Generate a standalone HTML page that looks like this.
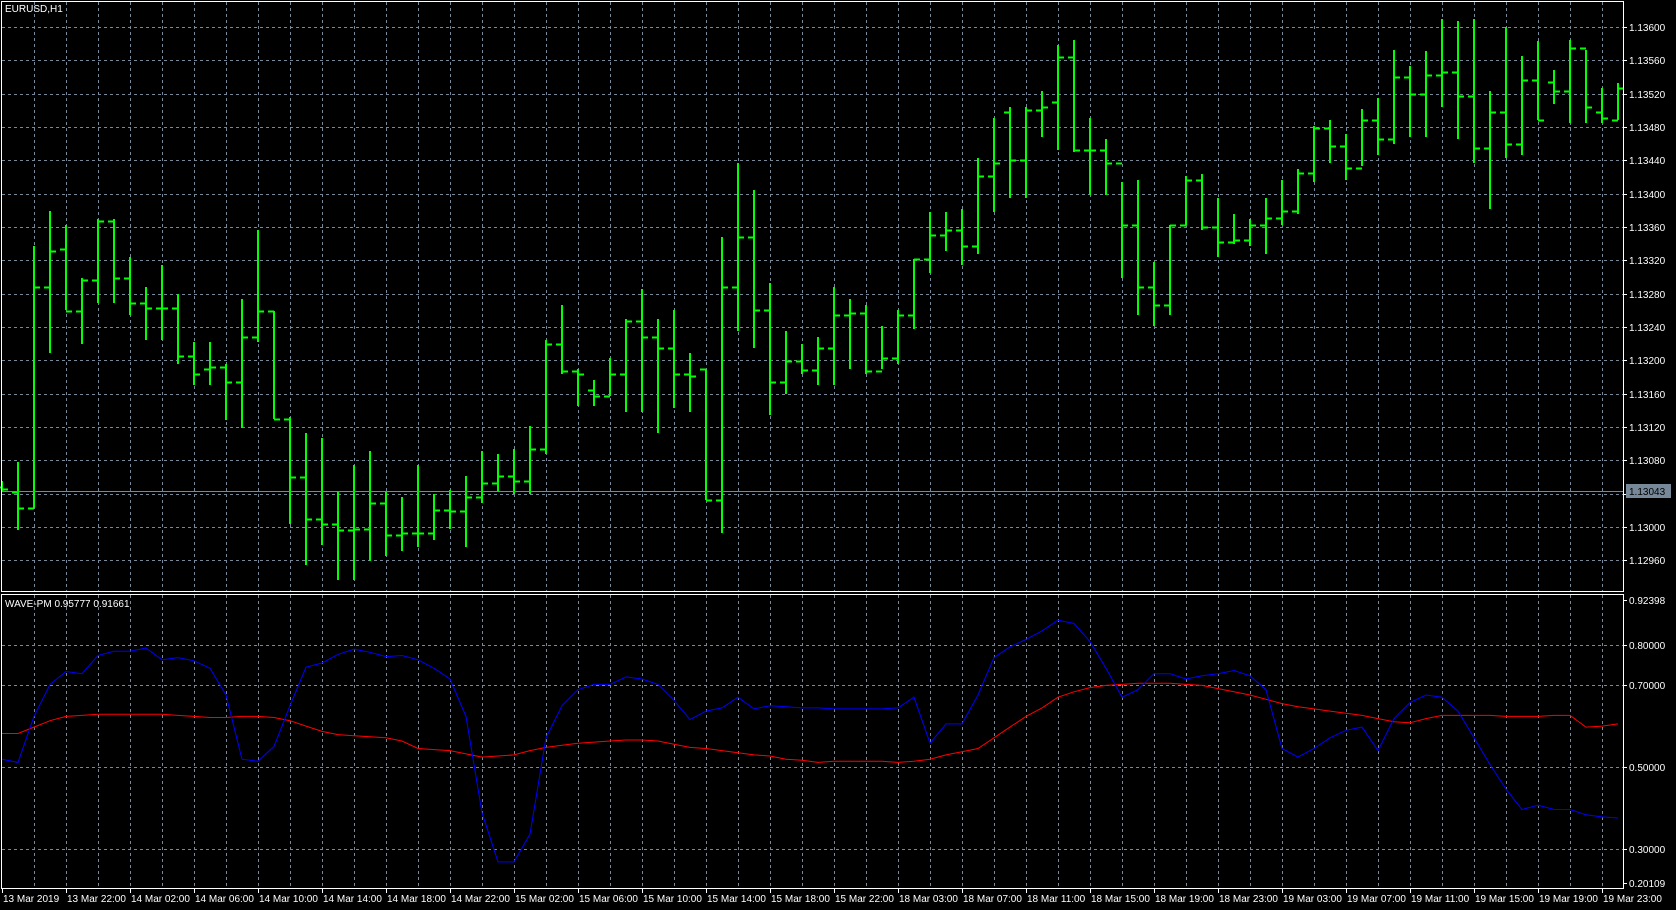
<!DOCTYPE html>
<html><head><meta charset="utf-8"><style>
html,body{margin:0;padding:0;background:#000;width:1676px;height:910px;overflow:hidden}
svg{display:block}
text{font-family:"Liberation Sans",sans-serif;font-size:10px;fill:#fff}
</style></head><body>
<svg id="s" width="1676" height="910" xmlns="http://www.w3.org/2000/svg">
<rect width="1676" height="910" fill="#000"/>
<g id="grid" stroke="#778899" stroke-width="1" stroke-dasharray="3,3"></g>
<g id="bars" stroke="#00ff00" stroke-width="2" fill="none"></g>
<line x1="2" y1="491.5" x2="1623" y2="491.5" stroke="#778899"/>
<polyline id="red" fill="none" stroke="#ff0000" stroke-width="1"/>
<polyline id="blue" fill="none" stroke="#0000ff" stroke-width="1"/>
<g stroke="#fff" stroke-width="1" fill="none">
<rect x="1.5" y="1.5" width="1622" height="590"/>
<rect x="1.5" y="594.5" width="1622" height="294"/>
</g>
<g id="ticks" stroke="#fff" stroke-width="1"></g>
<rect x="1626" y="484" width="45" height="14" fill="#778899"/>
<text x="1629" y="495" style="fill:#000">1.13043</text>
<text x="5" y="12" style="font-size:10px">EURUSD,H1</text>
<text x="5" y="607" style="font-size:10px">WAVE-PM 0.95777 0.91661</text>
<g id="labels">
<text x="1629" y="31">1.13600</text><text x="1629" y="64">1.13560</text><text x="1629" y="98">1.13520</text><text x="1629" y="131">1.13480</text><text x="1629" y="164">1.13440</text><text x="1629" y="198">1.13400</text><text x="1629" y="231">1.13360</text><text x="1629" y="264">1.13320</text><text x="1629" y="298">1.13280</text><text x="1629" y="331">1.13240</text><text x="1629" y="364">1.13200</text><text x="1629" y="398">1.13160</text><text x="1629" y="431">1.13120</text><text x="1629" y="464">1.13080</text><text x="1629" y="531">1.13000</text><text x="1629" y="564">1.12960</text>
<text x="1629" y="604">0.92398</text><text x="1629" y="649">0.80000</text><text x="1629" y="689">0.70000</text><text x="1629" y="771">0.50000</text><text x="1629" y="853">0.30000</text><text x="1629" y="887">0.20109</text>
</g>
<g id="times">
<text x="3" y="902">13 Mar 2019</text><text x="67" y="902">13 Mar 22:00</text><text x="131" y="902">14 Mar 02:00</text><text x="195" y="902">14 Mar 06:00</text><text x="259" y="902">14 Mar 10:00</text><text x="323" y="902">14 Mar 14:00</text><text x="387" y="902">14 Mar 18:00</text><text x="451" y="902">14 Mar 22:00</text><text x="515" y="902">15 Mar 02:00</text><text x="579" y="902">15 Mar 06:00</text><text x="643" y="902">15 Mar 10:00</text><text x="707" y="902">15 Mar 14:00</text><text x="771" y="902">15 Mar 18:00</text><text x="835" y="902">15 Mar 22:00</text><text x="899" y="902">18 Mar 03:00</text><text x="963" y="902">18 Mar 07:00</text><text x="1027" y="902">18 Mar 11:00</text><text x="1091" y="902">18 Mar 15:00</text><text x="1155" y="902">18 Mar 19:00</text><text x="1219" y="902">18 Mar 23:00</text><text x="1283" y="902">19 Mar 03:00</text><text x="1347" y="902">19 Mar 07:00</text><text x="1411" y="902">19 Mar 11:00</text><text x="1475" y="902">19 Mar 15:00</text><text x="1539" y="902">19 Mar 19:00</text><text x="1603" y="902">19 Mar 23:00</text>
</g>
</svg>
<script>
var NS="http://www.w3.org/2000/svg";
function el(p,t,a){var e=document.createElementNS(NS,t);for(var k in a)e.setAttribute(k,a[k]);p.appendChild(e);return e;}
var g=document.getElementById('grid'),tk=document.getElementById('ticks');
for(var x=34;x<1623;x+=32){el(g,'line',{x1:x+.5,y1:2,x2:x+.5,y2:591});el(g,'line',{x1:x+.5,y1:595,x2:x+.5,y2:888});}
for(var i=0;i<17;i++){var y=Math.round(27+i*33.33)+.5;el(g,'line',{x1:2,y1:y,x2:1623,y2:y});el(tk,'line',{x1:1623,y1:y,x2:1627,y2:y});}
[645,685,767,849].forEach(function(y){el(g,'line',{x1:2,y1:y+.5,x2:1623,y2:y+.5});el(tk,'line',{x1:1623,y1:y+.5,x2:1627,y2:y+.5});});
[600,883].forEach(function(y){el(tk,'line',{x1:1623,y1:y+.5,x2:1627,y2:y+.5});});
for(var k=0;k<26;k++){var x=2+64*k+.5;el(tk,'line',{x1:x,y1:888,x2:x,y2:893});}
var S=1.0693;
var B=[[450,460,455,457],[432,496,460,475],[230,475,475,268],[197,330,268,235],[210,290,233,291],[260,322,291,262],[205,283,262,207],[205,283,207,260],[240,295,260,283],[268,318,283,288],[248,318,288,288],[275,340,288,333],[320,360,333,350],[320,360,345,343],[340,393,343,357],[280,400,357,315],[215,320,315,291],[291,392,291,392],[390,490,392,446],[405,528,446,485],[410,510,485,490],[460,542,490,496],[435,542,496,495],[422,525,495,470],[460,520,470,500],[465,515,500,498],[435,512,498,498],[462,505,498,477],[458,495,477,478],[445,512,478,465],[422,470,465,452],[425,460,452,445],[420,462,445,450],[398,462,450,420],[318,425,420,322],[285,350,322,347],[345,380,347,350],[355,380,365,370],[335,370,370,350],[298,385,350,300],[270,385,300,315],[298,405,315,325],[290,382,325,350],[330,385,350,352],[345,468,345,468],[222,498,468,268],[152,310,268,222],[178,325,222,290],[265,388,290,357],[310,368,357,338],[322,350,338,346],[315,360,346,325],[268,360,325,295],[280,345,295,293],[285,350,293,347],[305,345,347,335],[290,340,335,295],[242,308,295,242],[198,255,242,220],[198,235,220,215],[195,248,215,230],[148,238,230,165],[110,198,165,152],[100,185,105,150],[100,185,150,103],[85,128,103,100],[42,140,95,53],[37,142,53,140],[110,182,140,140],[130,182,140,152],[170,260,152,210],[168,295,210,268],[245,305,268,285],[210,295,285,210],[165,210,210,168],[163,215,168,212],[185,240,212,226],[200,228,226,224],[205,230,224,210],[185,238,210,204],[168,210,204,197],[158,200,197,162],[118,170,162,120],[112,152,120,137],[125,168,137,157],[102,155,157,112],[92,145,112,130],[47,135,130,72],[62,128,72,88],[48,128,88,70],[18,100,70,67],[20,130,67,90],[18,152,90,138],[85,195,138,105],[25,148,105,135],[52,145,135,75],[38,112,75,112],[65,97,77,85],[37,115,85,45],[47,115,45,100],[82,115,105,110],[78,112,112,82]];
var bg=document.getElementById('bars'),d='';
B.forEach(function(b,i){var x=2+16*i;var h=Math.round(b[0]*S),l=Math.round(b[1]*S),o=Math.round(b[2]*S)+.5,c=Math.round(b[3]*S)+.5;
d+='M'+x+' '+h+'V'+l+'M'+(x-6)+' '+o+'H'+x+'M'+x+' '+c+'H'+(x+6);});
el(bg,'path',{d:d});
var BL=[710,713,670,640,628,630,613,609,609,606,617,615,618,625,650,710,712,698,660,624,620,612,607,610,614,613,617,625,635,670,760,806,806,780,690,660,645,640,640,633,635,640,655,673,665,662,652,663,660,661,662,662,663,663,663,663,662,652,695,677,677,650,615,605,598,590,580,583,600,625,652,645,630,630,635,632,630,627,632,645,700,708,700,690,683,680,702,672,657,650,652,665,690,715,738,757,753,757,757,762,764,765];
var RD=[686,686,680,674,670,669,668,668,668,668,668,669,670,671,671,670,670,671,674,679,684,687,688,689,690,693,700,701,702,705,708,707,706,702,699,697,695,694,693,692,692,693,696,699,700,702,704,706,707,710,711,713,712,712,712,712,713,712,710,706,703,700,690,680,670,662,652,647,643,641,640,639,639,639,640,641,644,647,650,654,658,661,663,665,667,669,672,675,676,672,669,669,669,669,670,670,670,669,669,680,679,677];
function pts(a){return a.map(function(v,i){return (2+16*i)+','+(v*S).toFixed(1);}).join(' ');}
document.getElementById('blue').setAttribute('points',pts(BL));
document.getElementById('red').setAttribute('points',pts(RD));
</script>
</body></html>
